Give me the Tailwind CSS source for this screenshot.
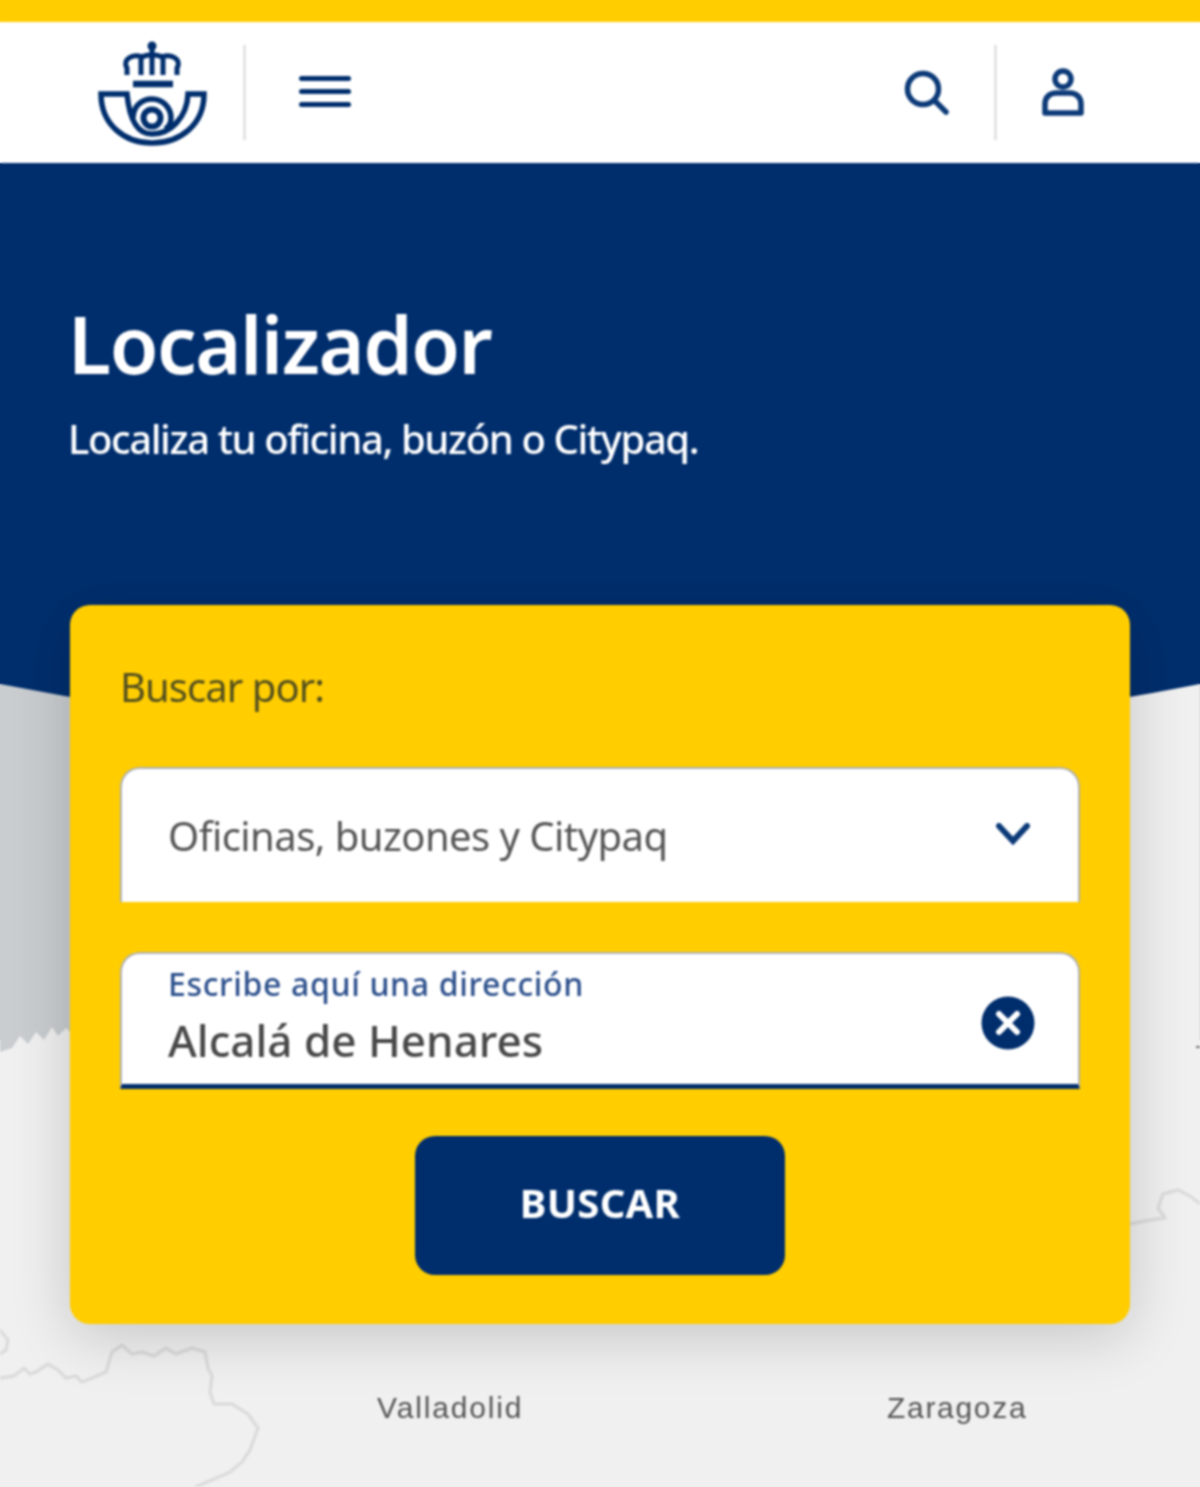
<!DOCTYPE html>
<html lang="es"><head><meta charset="utf-8"><title>Localizador</title>
<script src="https://cdn.jsdelivr.net/npm/@tailwindcss/browser@4"></script></head>
<body class="m-0">
<div class="relative w-[1200px] h-[1487px] overflow-hidden bg-[linear-gradient(#ffcd00_22px,#fff_22px,#fff_163px,#002e6d_163px,#002e6d_684px,#c9cdd0_684px,#c9cdd0_1040px,#f0f0f0_1040px)]">
<div class="relative w-[1200px] h-[1487px] overflow-hidden bg-[#f0f0f0] font-['Noto_Sans',sans-serif] blur-[1px]">
  <svg class="absolute inset-0" width="1200" height="1487" viewBox="0 0 1200 1487" fill="none">
    <path d="M0 660H120V1010L72 1034L66 1028L58 1036L52 1027L44 1040L36 1032L28 1044L20 1036L12 1048L0 1052Z" fill="#c9cdd0"/>
    <path d="M0 684Q600 802 1200 684V600H0Z" fill="#002e6d"/>
    <path d="M0 1330L8 1340L6 1350L0 1354M0 1378L14 1376L24 1368L30 1374L36 1372L48 1364L58 1370L66 1378L76 1376L82 1382L92 1378L106 1372L112 1352L122 1345L132 1354L142 1352L154 1356L166 1348L176 1354L192 1348L205 1352L208 1368L212 1376L210 1392L214 1404L232 1404L248 1414L258 1428L250 1450L242 1462L230 1472L212 1480L195 1487" stroke="#dcdcdc" stroke-width="3.5" stroke-linejoin="round"/>
    <path d="M1130 1224L1150 1220L1165 1218L1158 1208L1163 1194L1178 1190L1190 1196L1200 1204" stroke="#dcdcdc" stroke-width="3.5" stroke-linejoin="round"/>
    <path d="M1196 1047H1200" stroke="#777" stroke-width="2"/>
  </svg>

  <div class="relative h-[22px] bg-[#ffcd00]"></div>
  <header class="relative h-[141px] bg-white flex items-center">
    <svg class="ml-[97px] mt-[3px] shrink-0" width="110" height="106" viewBox="97 41 110 106" fill="none" stroke="#002e6d" stroke-width="5.5">
      <circle cx="152" cy="46" r="4.5" fill="#002e6d" stroke="none"/>
      <path d="M152 48V75M127 75V68C122 60 132 53 142 57C147 54 157 54 162 57C172 53 182 60 177 68V75M141 75V58M163 75V58" stroke-width="5"/>
      <path d="M133 84H173" stroke-width="6.5"/>
      <path d="M127 94H101C101 125 125 143 152 143C180 143 204 125 204 94H188C187 118 170 134 152 134C140 134 130 125 127 94Z"/>
      <path d="M133 118C133 106 142 99 152 99C163 99 171 108 171 118C171 123 169 127 165 129"/>
      <circle cx="152" cy="118" r="8.5" stroke-width="6"/>
    </svg>
    <div class="w-[3px] h-[95px] bg-[#e3e3e3] ml-[36px] shrink-0"></div>
    <div class="ml-[53px] mt-[-3px] w-[52px] flex flex-col gap-[8px]">
      <div class="h-[5px] rounded-full bg-[#002e6d]"></div>
      <div class="h-[5px] rounded-full bg-[#002e6d]"></div>
      <div class="h-[5px] rounded-full bg-[#002e6d]"></div>
    </div>
    <svg class="ml-auto" width="50" height="50" viewBox="903 67 50 50" fill="none" stroke="#0c3a78" stroke-width="5.5" stroke-linecap="round">
      <circle cx="923" cy="88" r="15.5"/><path d="M935 100L946 111"/>
    </svg>
    <div class="w-[3px] h-[95px] bg-[#e3e3e3] ml-[41px] shrink-0"></div>
    <svg class="ml-[44px] mr-[115px]" width="44" height="50" viewBox="1041 67 44 50" fill="none" stroke="#0c3a78" stroke-width="5.5" stroke-linejoin="round">
      <circle cx="1063" cy="78" r="8"/><path d="M1045 112V103C1045 96 1050 92 1056 92H1070C1076 92 1081 96 1081 103V112Z"/>
    </svg>
  </header>

  <section class="relative h-[521px] bg-[#002e6d] px-[68px] pt-[136px] text-white">
    <h1 class="text-[79px] leading-[90px] font-semibold tracking-[-1.45px]">Localizador</h1>
    <p class="mt-[22px] text-[40px] leading-[56px] font-medium tracking-[-1.4px]">Localiza tu oficina, buzón o Citypaq.</p>
  </section>

  <form class="relative mx-[70px] -mt-[79px] h-[719px] bg-[#ffcd00] rounded-[20px] px-[50px] pt-[54px] shadow-[0_12px_60px_rgba(0,0,0,0.18)]">
    <div class="text-[40px] leading-[56px] tracking-[-0.95px] text-[#54501f]">Buscar por:</div>
    <div class="mt-[52px] h-[135px] bg-white rounded-t-[20px] border-2 border-b-0 border-[#b0b2b8] pl-[46px] pr-[48px] flex items-center justify-between">
      <span class="text-[40px] tracking-[-0.55px] text-[#555555]">Oficinas, buzones y Citypaq</span>
      <svg class="mb-[4px]" width="34" height="22" viewBox="0 0 34 22" fill="none" stroke="#0c3a78" stroke-width="6" stroke-linecap="round"><path d="M3 3L17 18L31 3"/></svg>
    </div>
    <div class="relative mt-[50px] h-[137px] bg-white rounded-t-[20px] border-2 border-b-[5px] border-[#b0b2b8] border-b-[#002e6d] pl-[46px] pt-[8px]">
      <div class="text-[32px] leading-[44px] font-medium tracking-[0.65px] text-[#2b4f8c]">Escribe aquí una dirección</div>
      <div class="mt-[6px] text-[44px] leading-[56px] font-medium tracking-[0px] text-[#484848]">Alcalá de Henares</div>
      <svg class="absolute right-[43px] top-[42px]" width="54" height="54" viewBox="0 0 54 54"><circle cx="27" cy="27" r="26.5" fill="#002e6d"/><path d="M18 18L36 36M36 18L18 36" stroke="#fff" stroke-width="6" stroke-linecap="round"/></svg>
    </div>
    <button type="button" class="block mx-auto mt-[47px] w-[370px] h-[139px] rounded-[20px] bg-[#002e6d] text-white text-[40px] font-bold tracking-[0.3px] pb-[6px]">BUSCAR</button>
  </form>

  <div class="absolute left-[377px] top-[1388px] font-['Liberation_Sans',sans-serif] text-[30px] leading-[40px] tracking-[1.85px] text-[#555555]">Valladolid</div>
  <div class="absolute left-[887px] top-[1388px] font-['Liberation_Sans',sans-serif] text-[30px] leading-[40px] tracking-[1.7px] text-[#555555]">Zaragoza</div>
</div>
</div>
</body></html>
